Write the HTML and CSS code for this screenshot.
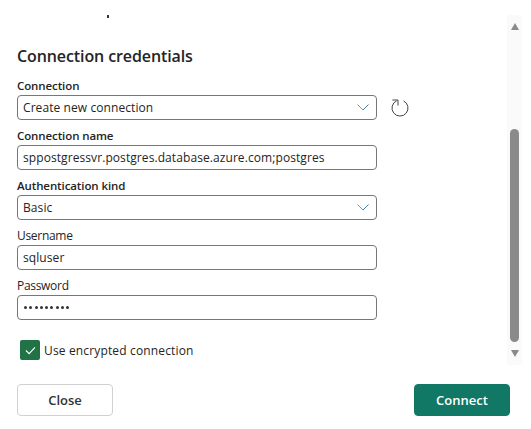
FILE: index.html
```html
<!DOCTYPE html>
<html lang="en">
<head>
    <meta charset="UTF-8">
    <meta name="viewport" content="width=device-width, initial-scale=1.0">
    <title>Connection credentials</title>
    <link rel="stylesheet" href="styles.css">
</head>
<body>
    <div class="content">
        <form class="form">
            <div class="speck"></div>
            <h2 class="title">Connection credentials</h2>

            <div class="field">
                <label class="label">Connection</label>
                <div class="field-row">
                    <div class="box">
                        <span>Create new connection</span>
                        <svg class="chevron" width="12" height="7" viewBox="0 0 12 7">
                            <path d="M0.5 0.5l5.5 5.5" stroke="#b08a6a" fill="none"/>
                            <path d="M6 6l5.5-5.5" stroke="#3f7fb0" fill="none"/>
                        </svg>
                    </div>
                    <svg class="refresh" width="20" height="20" viewBox="0 0 20 20">
                        <path d="M6.6 2.8A8 8 0 1 0 13.6 2.9" stroke="#444" fill="none"/>
                        <path d="M2.4 2H8V7.5" stroke="#444" fill="none"/>
                    </svg>
                </div>
            </div>

            <div class="field">
                <label class="label">Connection name</label>
                <div class="box">sppostgressvr.postgres.database.azure.com;postgres</div>
            </div>

            <div class="field">
                <label class="label">Authentication kind</label>
                <div class="box">
                    <span>Basic</span>
                    <svg class="chevron" width="12" height="7" viewBox="0 0 12 7">
                        <path d="M0.5 0.5l5.5 5.5" stroke="#b08a6a" fill="none"/>
                        <path d="M6 6l5.5-5.5" stroke="#3f7fb0" fill="none"/>
                    </svg>
                </div>
            </div>

            <div class="field">
                <label class="label plain">Username</label>
                <div class="box">sqluser</div>
            </div>

            <div class="field">
                <label class="label plain">Password</label>
                <div class="box dots">
                    <i></i><i></i><i></i><i></i><i></i><i></i><i></i><i></i><i></i>
                </div>
            </div>

            <div class="check-row">
                <span class="check">
                    <svg width="11" height="9" viewBox="0 0 12 10">
                        <path d="M1 5l3.5 3.5L11 1.5" stroke="#fff" stroke-width="1.2" fill="none"/>
                    </svg>
                </span>
                <span>Use encrypted connection</span>
            </div>
        </form>

        <div class="scrollbar">
            <div class="arrow up"></div>
            <div class="thumb"></div>
            <div class="arrow down"></div>
        </div>
    </div>

    <div class="footer">
        <button class="btn" type="button">Close</button>
        <button class="btn primary" type="button">Connect</button>
    </div>
</body>
</html>
```

FILE: styles.css
```css
body {
    margin: 0;
    background: #fff;
    color: #252423;
    font-family: 'Open Sans', 'Noto Sans', sans-serif;
    font-size: 12px;
}

.content {
    display: flex;
    justify-content: space-between;
    padding: 15px 9px 0 17px;
}

.form {
    width: 360px;
}

.speck {
    width: 2px;
    height: 3px;
    margin-left: 90px;
    background: #333;
}

.title {
    margin: 25px 0 8px;
    font-size: 16px;
    line-height: 26px;
    font-weight: 600;
    letter-spacing: -0.1px;
}

.field {
    height: 50px;
}

.label {
    display: block;
    height: 18px;
    line-height: 18px;
    font-weight: 600;
    font-size: 11.5px;
    letter-spacing: -0.1px;
}

.label.plain {
    font-weight: 400;
    font-size: 12px;
    letter-spacing: -0.3px;
}

.field-row {
    display: flex;
    align-items: center;
    gap: 13px;
}

.field-row .box {
    flex: none;
    width: 100%;
}

.box {
    box-sizing: border-box;
    height: 25px;
    padding: 0 7px 0 5px;
    display: flex;
    align-items: center;
    justify-content: space-between;
    border: 1px solid #777;
    border-radius: 4px;
    font-size: 12px;
    letter-spacing: 0.08px;
    white-space: nowrap;
}

.chevron {
    flex: none;
}

.refresh {
    flex: none;
}

.dots {
    justify-content: flex-start;
    gap: 2.3px;
    padding-left: 6px;
}

.dots i {
    width: 3px;
    height: 3px;
    border-radius: 50%;
    background: #333;
}

.check-row {
    display: flex;
    align-items: center;
    gap: 4px;
    margin: 13px 0 0 3px;
    font-size: 12px;
    letter-spacing: 0.15px;
}

.check {
    width: 20px;
    height: 20px;
    display: flex;
    align-items: center;
    justify-content: center;
    border-radius: 2px;
    background: #217346;
}

.scrollbar {
    width: 15px;
    height: 350px;
    display: flex;
    flex-direction: column;
    align-items: center;
    background: #fafafa;
}

.arrow {
    width: 0;
    height: 0;
    border-left: 4.5px solid transparent;
    border-right: 4.5px solid transparent;
}

.arrow.up {
    margin-top: 8px;
    border-bottom: 7px solid #8a8a8a;
}

.arrow.down {
    margin-top: 8px;
    border-top: 7px solid #8a8a8a;
}

.thumb {
    width: 9px;
    height: 213px;
    margin-top: 99px;
    border-radius: 5px;
    background: #8a8a8a;
}

.footer {
    display: flex;
    justify-content: space-between;
    width: 493px;
    margin: 19px 0 0 17px;
}

.btn {
    width: 96px;
    height: 32px;
    padding: 0;
    border: 1px solid #d1d1d1;
    border-radius: 4px;
    background: #fff;
    color: #333;
    font-family: inherit;
    font-size: 13px;
    font-weight: 600;
}

.primary {
    border-color: #117865;
    background: #117865;
    color: #fff;
}
```
